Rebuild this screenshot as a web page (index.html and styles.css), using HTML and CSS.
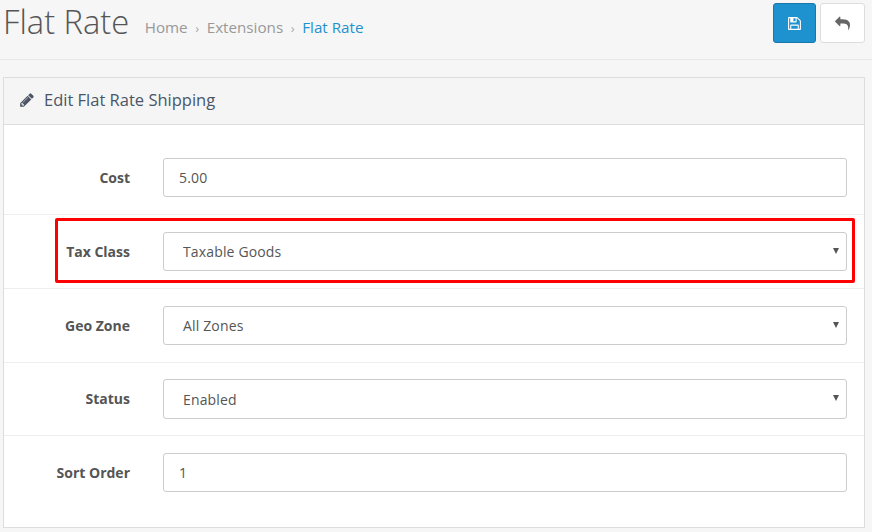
FILE: index.html
```html
<!DOCTYPE html>
<html lang="en">
<head>
<meta charset="utf-8">
<title>Flat Rate</title>
<link rel="stylesheet" href="styles.css">
</head>
<body>
<header class="page-header">
  <h1 class="page-title">Flat Rate</h1>
  <ul class="breadcrumb">
    <li><a href="#">Home</a></li>
    <li class="sep">›</li>
    <li><a href="#">Extensions</a></li>
    <li class="sep">›</li>
    <li><a href="#" class="current">Flat Rate</a></li>
  </ul>
  <div class="actions">
    <button class="btn btn-primary" type="button" aria-label="Save">
      <svg class="icon" viewBox="0 0 1792 1792"><path d="M512 1536h768v-384h-768v384zm896 0h128v-896q0-14-10-38.5t-20-34.5l-281-281q-10-10-34-20t-39-10v416q0 40-28 68t-68 28h-576q-40 0-68-28t-28-68v-416h-128v1280h128v-416q0-40 28-68t68-28h832q40 0 68 28t28 68v416zm-384-928v-320q0-13-9.5-22.5t-22.5-9.5h-192q-13 0-22.5 9.5t-9.5 22.5v320q0 13 9.5 22.5t22.5 9.5h192q13 0 22.5-9.5t9.5-22.5zm640 32v928q0 40-28 68t-68 28h-1344q-40 0-68-28t-28-68v-1344q0-40 28-68t68-28h928q40 0 88 20t76 48l280 280q28 28 48 76t20 88z"/></svg>
    </button>
    <button class="btn btn-default" type="button" aria-label="Back">
      <svg class="icon" viewBox="0 0 1792 1792"><path d="M1792 1120q0 166-127 451-3 7-10.5 24t-13.5 30-13 22q-12 17-28 17-15 0-23.5-10t-8.5-25q0-9 2.5-26.5t2.5-23.5q5-68 5-123 0-101-17.5-181t-48.5-138.5-80-101-105.5-69.5-133-42.5-154-21.5-175.5-6h-224v256q0 26-19 45t-45 19-45-19l-512-512q-19-19-19-45t19-45l512-512q19-19 45-19t45 19 19 45v256h224q713 0 875 403 53 134 53 333z"/></svg>
    </button>
  </div>
</header>

<section class="panel">
  <div class="panel-heading">
    <svg class="icon pencil" viewBox="0 0 1792 1792"><path d="M491 1536l91-91-235-235-91 91v107h128v128h107zm523-928q0-22-22-22-10 0-17 7l-542 542q-7 7-7 17 0 22 22 22 10 0 17-7l542-542q7-7 7-17zm-54-192l416 416-832 832h-416v-416zm683 96q0 53-37 90l-166 166-416-416 166-165q36-38 90-38 53 0 91 38l235 234q37 39 37 91z"/></svg>
    <h2 class="panel-title">Edit Flat Rate Shipping</h2>
  </div>
  <form class="panel-body">
    <div class="form-row">
      <label class="form-label" for="cost">Cost</label>
      <input class="control" id="cost" type="text" value="5.00">
    </div>
    <div class="form-row">
      <label class="form-label" for="tax">Tax Class</label>
      <div class="select-wrap">
        <select class="control select" id="tax"><option>Taxable Goods</option></select>
      </div>
    </div>
    <div class="form-row">
      <label class="form-label" for="geo">Geo Zone</label>
      <div class="select-wrap">
        <select class="control select" id="geo"><option>All Zones</option></select>
      </div>
    </div>
    <div class="form-row">
      <label class="form-label" for="status">Status</label>
      <div class="select-wrap">
        <select class="control select" id="status"><option>Enabled</option></select>
      </div>
    </div>
    <div class="form-row">
      <label class="form-label" for="sort">Sort Order</label>
      <input class="control" id="sort" type="text" value="1">
    </div>
  </form>
  <div class="highlight"></div>
</section>
</body>
</html>
```

FILE: styles.css
```css
* { box-sizing: border-box; }

html, body { height: 100%; }

body {
  margin: 0;
  background: #f6f6f6;
  color: #555;
  font-family: "Open Sans", sans-serif;
  font-size: 14px;
  overflow: hidden;
}

.page-header {
  display: flex;
  align-items: flex-start;
  height: 60px;
  padding: 2px 7px 0 3px;
  border-bottom: 1px solid #e8e8e8;
}

.page-title {
  margin: 0;
  font-size: 32.7px;
  line-height: 40px;
  font-weight: 300;
  color: #555;
}

.breadcrumb {
  display: flex;
  align-items: baseline;
  gap: 7.6px;
  margin: 15px 0 0 15.5px;
  padding: 0;
  list-style: none;
  font-size: 15.2px;
}

.breadcrumb a { color: #999; text-decoration: none; }
.breadcrumb a.current { color: #1e91cf; }
.sep { color: #aaa; font-size: 13px; }

.actions {
  display: flex;
  gap: 4px;
  margin: 1px 0 0 auto;
}

.btn {
  display: flex;
  align-items: center;
  justify-content: center;
  width: 45px;
  height: 40px;
  padding: 0;
  border-radius: 3px;
  border: 1px solid #ddd;
  background: #fff;
}

.btn-primary {
  width: 43px;
  background: #1e91cf;
  border-color: #1978ab;
  color: #fff;
}

.btn-default { color: #666; }

.icon {
  width: 15px;
  height: 15px;
  fill: currentColor;
  display: block;
}

.panel {
  position: relative;
  margin: 17px 7px 0 3px;
  height: 451px;
  background: #fff;
  border: 1px solid #ddd;
}

.panel-heading {
  display: flex;
  align-items: center;
  height: 47px;
  padding: 0 0 2px 15px;
  background: #f5f5f5;
  border-bottom: 1px solid #ddd;
  color: #4b5563;
}

.pencil { width: 16px; height: 16px; margin-right: 9px; }

.panel-title {
  margin: 0 0 2px;
  font-size: 16.5px;
  font-weight: 400;
  color: #4a5568;
}

.panel-body {
  display: flex;
  flex-direction: column;
  padding-top: 16px;
}

.form-row {
  display: flex;
  align-items: center;
  height: 73.8px;
  padding-right: 17px;
  border-bottom: 1px solid #eee;
}

.form-row:first-child { height: 74px; }
.form-row:last-child { border-bottom: 0; padding-bottom: 1px; }

.form-label {
  flex: 0 0 126px;
  text-align: right;
  font-weight: 700;
  font-size: 14px;
  color: #555;
}

.form-row > .control,
.select-wrap {
  flex: 1;
  margin-left: 33px;
}

.control {
  display: block;
  width: 100%;
  height: 39.2px;
  padding: 0 15px;
  background: #fff;
  border: 1px solid #ccc;
  border-radius: 3px;
  font-family: inherit;
  font-size: 14px;
  letter-spacing: 0.15px;
  color: #555;
}

.select-wrap { position: relative; }

.select-wrap::after {
  content: "";
  position: absolute;
  top: 16px;
  right: 8px;
  border-left: 3px solid transparent;
  border-right: 3px solid transparent;
  border-top: 6px solid #555;
  pointer-events: none;
}

.select {
  appearance: none;
  -webkit-appearance: none;
  padding: 1px 19px 0;
}

.highlight {
  position: absolute;
  left: 51px;
  top: 140px;
  width: 800px;
  height: 65px;
  border: 3px solid #f00;
  border-radius: 2px;
  pointer-events: none;
}
```
